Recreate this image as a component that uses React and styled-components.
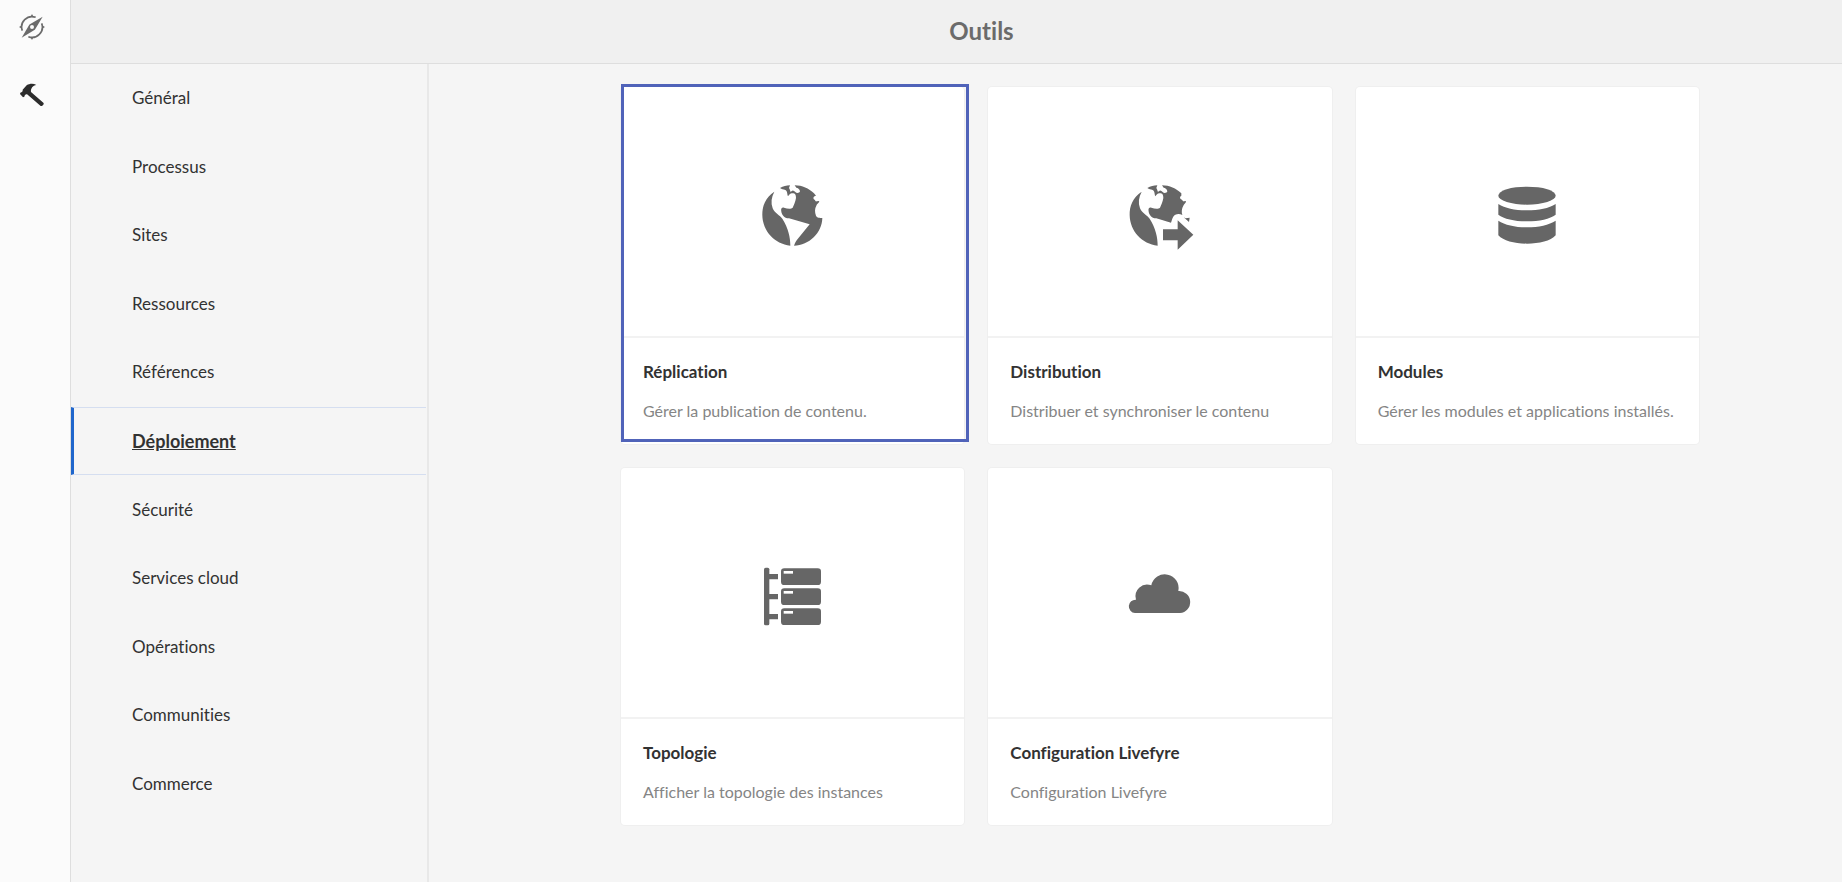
import React from "react";
import styled, { createGlobalStyle } from "styled-components";

const GlobalStyle = createGlobalStyle`
  *, *::before, *::after { box-sizing: border-box; }
  body {
    margin: 0;
    background: #f5f5f5;
    color: #323232;
    font-family: Lato, "Liberation Sans", sans-serif;
    font-variant-ligatures: none;
  }
  a { color: inherit; text-decoration: none; }
`;

const Page = styled.div`
  display: grid;
  grid-template-columns: 71px minmax(0, 1fr);
  min-height: 100vh;
`;

const Rail = styled.nav`
  display: flex;
  flex-direction: column;
  gap: 42px;
  padding: 14px 0 0 19px;
  background: #fbfbfb;
  border-right: 1px solid #dedede;
`;

const RailLink = styled.a`
  display: block;
  width: 26px;
  height: 26px;
  color: ${(p) => (p.$active ? "#2c2c2c" : "#6b6b6b")};

  svg { display: block; }
`;

const Content = styled.div`
  display: flex;
  flex-direction: column;
`;

const Header = styled.header`
  display: flex;
  align-items: center;
  justify-content: center;
  height: 64px;
  padding: 0 0 2px 50px;
  background: #f0f0f0;
  border-bottom: 1px solid #dedede;
`;

const Title = styled.h1`
  margin: 0;
  color: #6b6b6b;
  font-size: 24px;
  line-height: 32px;
  font-weight: 700;
`;

const Body = styled.div`
  display: grid;
  grid-template-columns: 358px minmax(0, 1fr);
  flex: 1;
`;

const Sidebar = styled.nav`
  border-right: 2px solid #e8e8e8;
`;

const NavList = styled.ul`
  display: grid;
  grid-auto-rows: 1fr;
  min-height: 754px;
  margin: 0;
  padding: 0 1px 0 0;
  list-style: none;
`;

const NavLink = styled.a`
  display: flex;
  align-items: center;
  height: 100%;
  padding-left: 58px;
  border: solid transparent;
  border-width: 1px 0 1px 3px;
  font-size: 17px;
  line-height: 24px;

  &[aria-current] {
    border-color: #d5def0;
    border-left-color: #1f66cc;
    font-size: 18px;
    font-weight: 700;
    text-decoration: underline;
  }
`;

const Cards = styled.main`
  display: grid;
  grid-template-columns: repeat(3, minmax(0, 1fr));
  align-content: start;
  gap: 24px;
  padding: 23px 143px 56px 192px;
`;

const Card = styled.a`
  position: relative;
  display: flex;
  flex-direction: column;
  background: #fff;
  border-radius: 4px;
  box-shadow: 0 0 0 1px #efefef;

  &::after {
    content: ${(p) => (p.$selected ? '""' : "none")};
    position: absolute;
    inset: -3px -5px 2px 0;
    border: 3px solid #5063b9;
  }
`;

const CardArt = styled.div`
  display: flex;
  align-items: center;
  justify-content: center;
  height: 251px;
  border-bottom: 2px solid #f2f2f2;
  color: #666;
`;

const CardText = styled.div`
  padding: 22px 22px 21px;
`;

const CardTitle = styled.h2`
  margin: 0 0 15px;
  font-size: 17px;
  line-height: 24px;
  font-weight: 700;
`;

const CardNote = styled.p`
  margin: 0;
  color: #858585;
  font-size: 16px;
  line-height: 24px;
  white-space: nowrap;
`;

const Art = ({ box, children }) => (
  <svg width="80" height="80" viewBox={box} fill="currentColor" aria-hidden="true">
    {children}
  </svg>
);

const WEST = "M104 63C78 80 67 106 68 134C69 182 105 220 152 225C152 200 146 172 128 144C121 134 105 128 99 113C93 96 95 80 104 63Z";
const NORTH = "M121 52C131 47 140 45 151 44L148 52C151 56 151 60 153 64C157 58 162 58 167 64C171 69 180 67 181 62C180 54 174 52 170 51L165 44C188 44 207 53 223 68L229 75C222 76 220 80 222 85C227 88 227 93 231 92L239 91C238 98 231 100 230 105C225 114 225 124 229 135C232 142 240 141 248 142";

const Globe = () => (
  <Art box="40 4 240 240">
    <path d={WEST} />
    <path d={`${NORTH}C247 187 209 224 163 225C166 217 169 211 174 205L210 161L148 143C132 142 127 132 125 123C123 114 126 110 133 111C143 114 153 116 159 111C163 103 167 94 169 82C169 70 165 67 156 68C149 69 149 73 145 77C142 71 144 62 137 58C131 55 126 57 121 52Z`} />
  </Art>
);

const GlobeArrow = () => (
  <Art box="31 4 240 240">
    <g transform="translate(-8 0)">
      <path d={WEST} />
      <path d="M121 52C131 47 140 45 151 44L148 52C151 56 151 60 153 64C157 58 162 58 167 64C171 69 180 67 181 62C180 54 174 52 170 51L165 44C188 44 207 53 223 68L223 75C218 78 218 82 222 86C227 88 227 93 231 92L237 91C237 98 231 100 229 105C224 114 223 124 226 133C218 129 211 130 205 132C198 135 196 145 192 156L148 143C132 142 127 132 125 123C123 114 126 110 133 111C143 114 153 116 159 111C163 103 167 94 169 82C169 70 165 67 156 68C149 69 149 73 145 77C142 71 144 62 137 58C131 55 126 57 121 52Z" />
    </g>
    <path d="M222 140L228 143L240 141L238 154ZM160 176H204V149L251 192L204 237V209H160Z" />
  </Art>
);

const Database = () => (
  <Art box="21 4 240 240">
    <ellipse cx="141" cy="75" rx="86" ry="27" />
    <path d="M55 100C75 113 106 119 141 119S207 113 227 100V132C210 145 178 152 141 152S72 145 55 132ZM55 150C75 163 106 170 141 170S207 163 227 150V194C212 211 178 219 141 219S70 211 55 194Z" />
  </Art>
);

const Topology = () => (
  <Art box="40 7 240 240">
    <rect x="73" y="51" width="16" height="173" rx="5" />
    <path d="M85 70H115V86H85ZM85 130H115V146H85ZM85 190H115V206H85Z" />
    {[53, 113, 173].map((y) => (
      <g key={y}>
        <rect x="124" y={y} width="120" height="50" rx="10" />
        <rect x="132" y={y + 8} width="28" height="8" fill="#fff" />
      </g>
    ))}
  </Art>
);

const Cloud = () => (
  <Art box="31 7 240 240">
    <path d="M76 187A20 20 0 0 1 79 147A35 35 0 0 1 125 104A41 41 0 1 1 206 121A33 33 0 0 1 211 187Z" />
  </Art>
);

const Compass = () => (
  <svg width="26" height="26" viewBox="0 0 78 78" aria-hidden="true">
    <path
      d="M50 10A31 31 0 0 0 10 50M28 68A31 31 0 0 0 68 28"
      fill="none"
      stroke="currentColor"
      strokeWidth="5"
    />
    <path d="M34 9L39 0L44 9ZM34 69L39 78L44 69ZM9 34L0 39L9 44ZM69 34L78 39L69 44Z" fill="currentColor" />
    <path
      fillRule="evenodd"
      d="M71 8L49 45Q48 48 45 49L8 71L30 34Q31 31 34 30ZM39 33A6 6 0 1 0 39 45A6 6 0 1 0 39 33Z"
      fill="currentColor"
    />
  </svg>
);

const Hammer = () => (
  <svg width="26" height="26" viewBox="0 0 78 78" fill="currentColor" aria-hidden="true">
    <path d="M52 9C44 4 32 4 23 10L11 23C12 27 9 31 4 32L3 36L12 46L16 44C17 38 21 35 26 38L65 72Q68 73 70 71L74 67Q75 64 73 62L36 30C34 20 42 10 52 9Z" />
  </svg>
);

const SECTIONS = [
  "Général",
  "Processus",
  "Sites",
  "Ressources",
  "Références",
  "Déploiement",
  "Sécurité",
  "Services cloud",
  "Opérations",
  "Communities",
  "Commerce",
];

const TOOLS = [
  { title: "Réplication", note: "Gérer la publication de contenu.", Icon: Globe, selected: true },
  { title: "Distribution", note: "Distribuer et synchroniser le contenu", Icon: GlobeArrow },
  { title: "Modules", note: "Gérer les modules et applications installés.", Icon: Database },
  { title: "Topologie", note: "Afficher la topologie des instances", Icon: Topology },
  { title: "Configuration Livefyre", note: "Configuration Livefyre", Icon: Cloud },
];

export default function App() {
  return (
    <Page>
      <GlobalStyle />
      <Rail aria-label="Principal">
        <RailLink href="#navigation" aria-label="Navigation">
          <Compass />
        </RailLink>
        <RailLink href="#outils" aria-label="Outils" $active>
          <Hammer />
        </RailLink>
      </Rail>
      <Content>
        <Header>
          <Title>Outils</Title>
        </Header>
        <Body>
          <Sidebar aria-label="Outils">
            <NavList>
              {SECTIONS.map((name) => (
                <li key={name}>
                  <NavLink href="#section" aria-current={name === "Déploiement" ? "page" : undefined}>
                    {name}
                  </NavLink>
                </li>
              ))}
            </NavList>
          </Sidebar>
          <Cards>
            {TOOLS.map(({ title, note, Icon, selected }) => (
              <Card key={title} href="#outil" $selected={selected}>
                <CardArt>
                  <Icon />
                </CardArt>
                <CardText>
                  <CardTitle>{title}</CardTitle>
                  <CardNote>{note}</CardNote>
                </CardText>
              </Card>
            ))}
          </Cards>
        </Body>
      </Content>
    </Page>
  );
}
